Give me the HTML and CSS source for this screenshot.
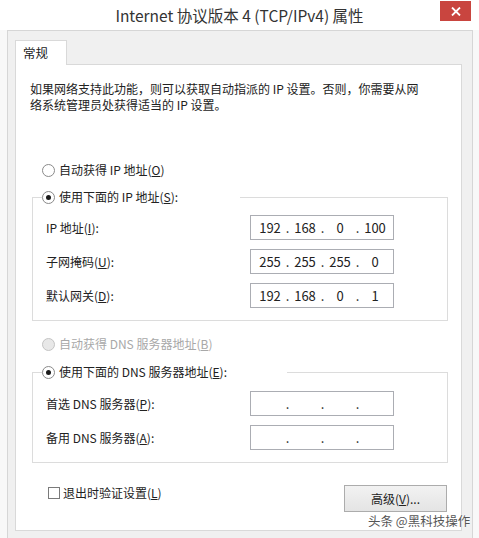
FILE: index.html
```html
<!DOCTYPE html>
<html lang="zh-CN">
<head>
<meta charset="utf-8">
<title>Internet 协议版本 4 (TCP/IPv4) 属性</title>
<link rel="stylesheet" href="styles.css">
</head>
<body>
<div class="window">
  <div class="titlebar">
    <span class="tb-spacer"></span>
    <h1 class="title">Internet 协议版本 4 (TCP/IPv4) 属性</h1>
    <button class="close" aria-label="关闭">
      <svg width="10" height="9" viewBox="0 0 10 9"><path d="M1 0.5 L9 8.5 M9 0.5 L1 8.5" stroke="#fff" stroke-width="1.8" fill="none"/></svg>
    </button>
  </div>
  <div class="client">
    <div class="tabs"><div class="tab">常规</div></div>
    <div class="panel">
      <p class="intro">如果网络支持此功能，则可以获取自动指派的 IP 设置。否则，你需要从网<br>络系统管理员处获得适当的 IP 设置。</p>

      <div class="radio-row first"><span class="radio"></span><span>自动获得 IP 地址(<u>O</u>)</span></div>
      <fieldset class="group g1">
        <legend class="legend l1"><span class="radio checked"></span><span>使用下面的 IP 地址(<u>S</u>):</span></legend>
        <div class="fields">
          <span class="label">IP 地址(<u>I</u>):</span>
          <div class="ip"><span class="seg">192</span><span class="dot">.</span><span class="seg">168</span><span class="dot">.</span><span class="seg">0</span><span class="dot">.</span><span class="seg">100</span></div>
          <span class="label">子网掩码(<u>U</u>):</span>
          <div class="ip"><span class="seg">255</span><span class="dot">.</span><span class="seg">255</span><span class="dot">.</span><span class="seg">255</span><span class="dot">.</span><span class="seg">0</span></div>
          <span class="label">默认网关(<u>D</u>):</span>
          <div class="ip"><span class="seg">192</span><span class="dot">.</span><span class="seg">168</span><span class="dot">.</span><span class="seg">0</span><span class="dot">.</span><span class="seg">1</span></div>
        </div>
      </fieldset>

      <div class="radio-row second disabled"><span class="radio"></span><span>自动获得 DNS 服务器地址(<u>B</u>)</span></div>
      <fieldset class="group g2">
        <legend class="legend l2"><span class="radio checked"></span><span>使用下面的 DNS 服务器地址(<u>E</u>):</span></legend>
        <div class="fields">
          <span class="label">首选 DNS 服务器(<u>P</u>):</span>
          <div class="ip"><span class="seg"></span><span class="dot">.</span><span class="seg"></span><span class="dot">.</span><span class="seg"></span><span class="dot">.</span><span class="seg"></span></div>
          <span class="label">备用 DNS 服务器(<u>A</u>):</span>
          <div class="ip"><span class="seg"></span><span class="dot">.</span><span class="seg"></span><span class="dot">.</span><span class="seg"></span><span class="dot">.</span><span class="seg"></span></div>
        </div>
      </fieldset>

      <div class="footer">
        <div class="check-row"><span class="checkbox"></span><span>退出时验证设置(<u>L</u>)</span></div>
        <button class="btn">高级(<u>V</u>)...</button>
      </div>
    </div>
  </div>
  <div class="watermark">头条 @黑科技操作</div>
</div>
</body>
</html>
```

FILE: styles.css
```css
* { box-sizing: border-box; }

html, body {
  margin: 0;
  padding: 0;
  background: #f8f8f8;
}

body {
  font-family: "Noto Sans CJK SC", "Noto Sans", sans-serif;
  font-size: 12px;
  color: #222;
}

u { text-decoration: underline; text-underline-offset: 1px; }

.window {
  position: relative;
  width: 479px;
  height: 538px;
  overflow: hidden;
  background: #f8f8f8;
}

/* Title bar */
.titlebar {
  display: grid;
  grid-template-columns: 1fr auto 1fr;
  height: 30px;
  background: #fff;
}

.title {
  margin: 0;
  font-family: "Noto Sans CJK SC", "Noto Sans", sans-serif;
  font-weight: normal;
  font-size: 15.5px;
  line-height: 30px;
  color: #333;
  white-space: nowrap;
}

.close {
  justify-self: end;
  align-self: start;
  margin: 1px 8px 0 0;
  width: 31px;
  height: 20px;
  padding: 0;
  border: none;
  background: #c9453f;
  display: flex;
  align-items: center;
  justify-content: center;
}

/* Client area */
.client {
  margin: 0 6px 0 7px;
  height: 508px;
  border: 1px solid #d6d6d6;
  border-bottom: none;
  background: #f0f0f0;
  padding: 9px 10px 0 7px;
}

.tabs {
  display: flex;
}

.tab {
  position: relative;
  z-index: 1;
  width: 52px;
  height: 25px;
  margin-bottom: -1px;
  border: 1px solid #d9d9d9;
  border-bottom: none;
  background: #fff;
  padding-left: 7px;
  font-size: 12.5px;
  line-height: 23px;
  color: #222;
}

.panel {
  width: 447px;
  height: 467px;
  border: 1px solid #d9d9d9;
  background: #fff;
  display: flex;
  flex-direction: column;
}

.intro {
  margin: 16px 0 0 14px;
  line-height: 16px;
  color: #222;
}

/* Radios */
.radio-row {
  display: flex;
  align-items: center;
  gap: 4px;
  height: 16px;
  line-height: 16px;
  margin-left: 26px;
}

.radio-row.first { margin-top: 49px; }
.radio-row.second { margin-top: 15px; }

.radio-row.disabled { color: #a8a8a8; }

.radio {
  display: inline-block;
  flex: none;
  width: 13px;
  height: 13px;
  border: 1px solid #8a8a8a;
  border-radius: 50%;
  background: #fff;
  position: relative;
}

.radio.checked::after {
  content: "";
  position: absolute;
  left: 3px;
  top: 3px;
  width: 5px;
  height: 5px;
  border-radius: 50%;
  background: #1a1a1a;
}

.disabled .radio {
  border-color: #c4c4c4;
  background: #e8e8e8;
}

/* Group boxes */
.group {
  margin: 11px 13px 0 16px;
  padding: 0;
  border: 1px solid #dcdcdc;
  min-width: 0;
}

.g2 { margin-top: 12px; }

.legend {
  display: flex;
  align-items: center;
  gap: 4px;
  height: 16px;
  line-height: 16px;
  padding: 0;
  margin-left: 9px;
  background: #fff;
}

.l1 { width: 198px; }
.l2 { width: 245px; }

.fields {
  display: grid;
  grid-template-columns: 204px 144px;
  grid-auto-rows: 25px;
  row-gap: 9px;
  align-items: center;
  margin: 10px 0 12px 13px;
}

.g2 .fields { margin-top: 11px; }

.label {
  line-height: 16px;
  color: #222;
}

.ip {
  display: flex;
  align-items: center;
  width: 144px;
  height: 25px;
  border: 1px solid #abadb3;
  background: #fff;
  padding-left: 5.5px;
  font-size: 13px;
  color: #222;
}

.seg {
  width: 27px;
  text-align: center;
}

.dot {
  width: 8px;
  text-align: center;
}

/* Footer */
.footer {
  display: flex;
  justify-content: space-between;
  align-items: flex-start;
  margin: 22px 14px 0 32px;
}

.check-row {
  display: flex;
  align-items: center;
  gap: 3px;
  height: 16px;
  line-height: 16px;
}

.checkbox {
  display: inline-block;
  width: 12px;
  height: 12px;
  border: 1px solid #7a7a7a;
  background: #fff;
}

.btn {
  width: 103px;
  height: 27px;
  padding: 0;
  border: 1px solid #acacac;
  background: linear-gradient(#f2f2f2, #e4e4e4);
  font-family: "Noto Sans CJK SC", "Noto Sans", sans-serif;
  font-size: 12px;
  color: #222;
}

/* Watermark overlay */
.watermark {
  position: absolute;
  left: 368px;
  top: 512px;
  font-size: 12.5px;
  line-height: 18px;
  color: #555;
  white-space: nowrap;
  text-shadow: 0 0 2px #fff, 0 0 2px #fff;
}
```
